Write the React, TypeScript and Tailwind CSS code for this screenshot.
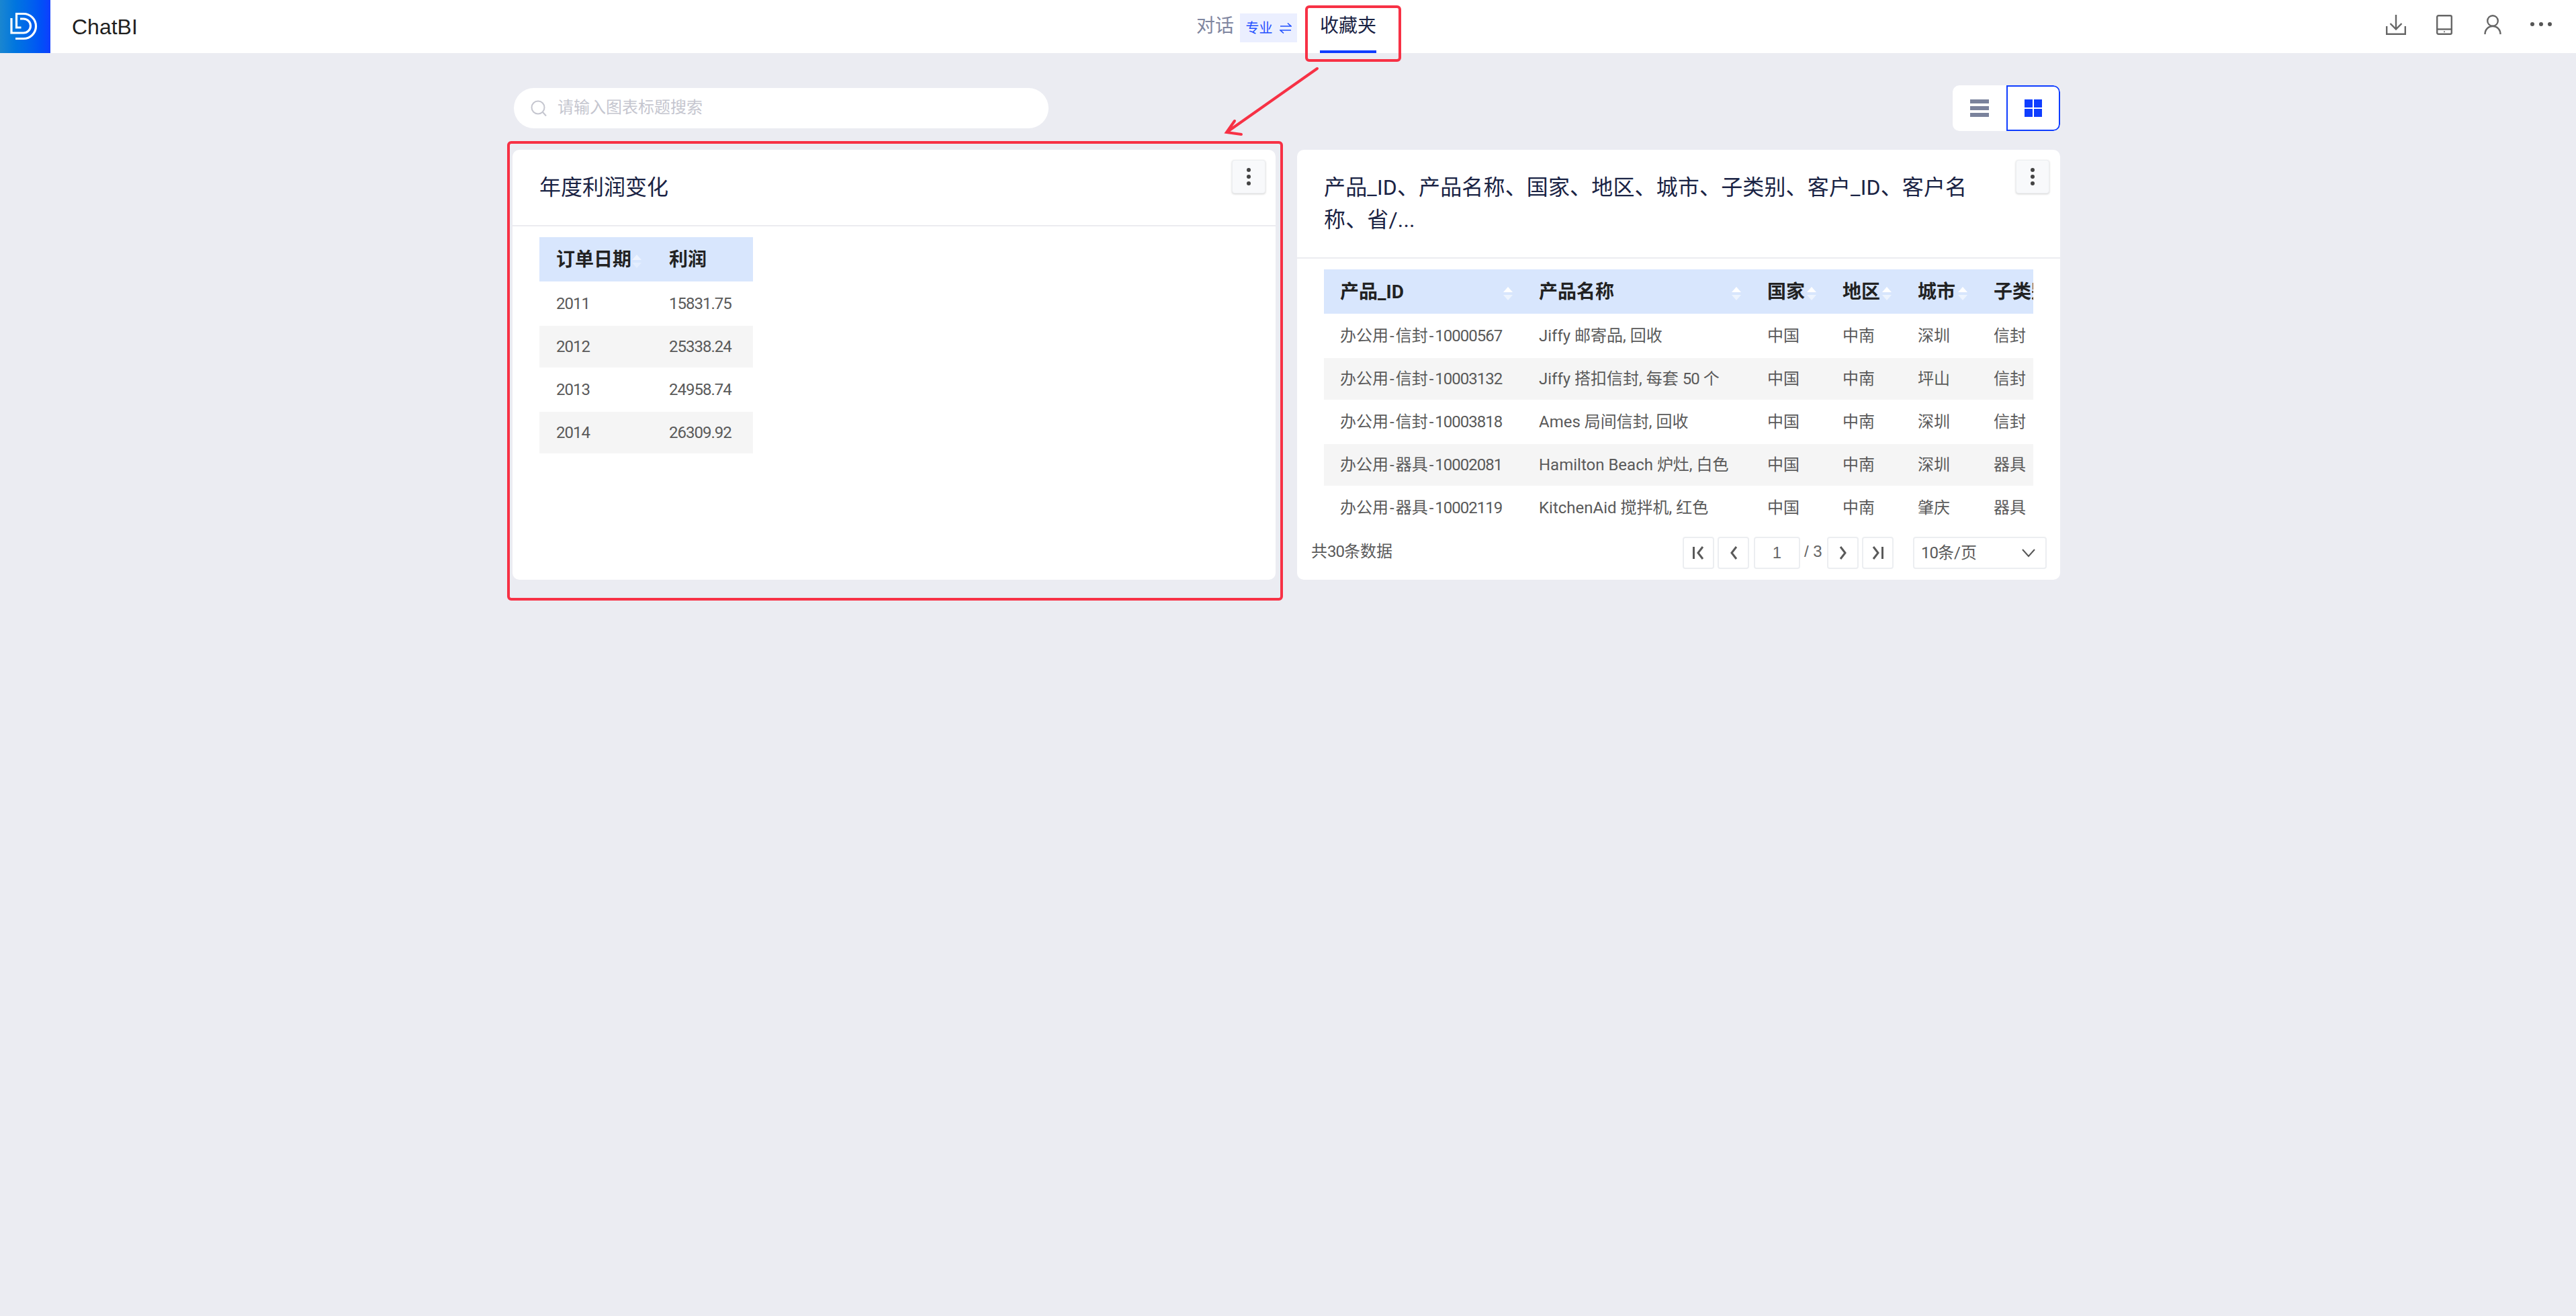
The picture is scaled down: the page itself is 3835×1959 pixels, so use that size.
import React from "react";

const FONT = "[font-family:Roboto,'Noto_Sans_CJK_SC',sans-serif]";

function T({ s }: { s: string }) {
  const parts = s.split(/([0-9.]+|-)/).filter(Boolean);
  return (
    <>
      {parts.map((p, i) => {
        if (p === "-") return <span key={i} className="mx-[2px]">-</span>;
        if (/^[0-9.]+$/.test(p)) return <span key={i} className="tracking-[-1px]">{p}</span>;
        return <span key={i}>{p}</span>;
      })}
    </>
  );
}

function Logo() {
  return (
    <svg width="75" height="79" viewBox="0 0 75 79" fill="none" stroke="#fff" strokeWidth="3.2">
      <path d="M23 20.500h12a18.500 18.500 0 0 1 0 37H23" />
      <path d="M17 27v22h18a10.500 10.500 0 0 0 0-21h-5" />
      <path d="M24.500 20v21h7" />
    </svg>
  );
}

function Sort({ color = "#ffffff" }: { color?: string }) {
  return (
    <svg width="16" height="20" viewBox="0 0 16 20" className="mt-1 shrink-0">
      <path d="M8 0l7 8H1z" fill={color} />
      <path d="M8 20l7-8H1z" fill={color} opacity="0.55" />
    </svg>
  );
}

function Kebab({ pos }: { pos: string }) {
  return (
    <div className={`absolute top-[15px] ${pos} flex h-[50px] w-[50px] flex-col items-center justify-center gap-1 rounded-[4px] border border-[#eceef1] bg-[#f8f9fb] shadow-[0_1px_3px_rgba(0,0,0,0.18)]`}>
      <span className="h-[6px] w-[6px] rounded-full bg-[#444]" />
      <span className="h-[6px] w-[6px] rounded-full bg-[#444]" />
      <span className="h-[6px] w-[6px] rounded-full bg-[#444]" />
    </div>
  );
}

const rows1 = [
  ["2011", "15831.75"],
  ["2012", "25338.24"],
  ["2013", "24958.74"],
  ["2014", "26309.92"],
];

const rows2 = [
  ["办公用-信封-10000567", "Jiffy 邮寄品, 回收", "中国", "中南", "深圳", "信封"],
  ["办公用-信封-10003132", "Jiffy 搭扣信封, 每套 50 个", "中国", "中南", "坪山", "信封"],
  ["办公用-信封-10003818", "Ames 局间信封, 回收", "中国", "中南", "深圳", "信封"],
  ["办公用-器具-10002081", "Hamilton Beach 炉灶, 白色", "中国", "中南", "深圳", "器具"],
  ["办公用-器具-10002119", "KitchenAid 搅拌机, 红色", "中国", "中南", "肇庆", "器具"],
];

const widths2 = ["w-[296px]", "w-[340px]", "w-[112px]", "w-[112px]", "w-[113px]", "w-[120px]"];
const heads2 = ["产品_ID", "产品名称", "国家", "地区", "城市", "子类别"];

function PageBtn({ children, w = "w-[47px]" }: { children: React.ReactNode; w?: string }) {
  return (
    <div className={`flex h-12 ${w} items-center justify-center rounded-[4px] border-2 border-[#eceef1] bg-white [font-family:'Liberation_Sans',sans-serif] text-[#666]`}>
      {children}
    </div>
  );
}

function Pg({ d }: { d: string }) {
  return (
    <svg width="22" height="22" viewBox="0 0 22 22" fill="none" stroke="#5a5a5a" strokeWidth="3">
      <path d={d} />
    </svg>
  );
}

export default function App() {
  return (
    <div className={`relative min-h-[1959px] bg-[#ebecf2] ${FONT}`}>
      <header className="relative flex h-[79px] items-center bg-white">
        <div className="h-[79px] w-[75px] bg-gradient-to-r from-[#1a86d0] to-[#0f3dff]">
          <Logo />
        </div>
        <div className="ml-[32px] [font-family:'Liberation_Sans',sans-serif] text-[32px] text-[#1f1f1f]">ChatBI</div>
        <div className="absolute left-[1781px] top-0 flex h-[79px] items-start">
          <div className="mt-[19px] text-[28px] leading-[40px] text-[#7f86a0]">对话</div>
          <div className="ml-[9px] mt-5 flex h-[43px] w-[85px] items-center justify-center gap-[10px] bg-[#ebefff] text-[20px] text-[#1f4fff]">
            <span>专业</span>
            <svg width="18" height="18" viewBox="0 0 18 18" fill="none" stroke="#1f4fff" strokeWidth="1.6">
              <path d="M1 6h16L12 1.500M17 12H1l5 4.500" />
            </svg>
          </div>
          <div className="ml-[34px] flex h-[79px] w-[84px] flex-col items-center border-b-4 border-[#0f3dff]">
            <span className="mt-[19px] text-[28px] leading-[40px] text-[#1a2344]">收藏夹</span>
          </div>
        </div>
        <div className="absolute left-[3552px] top-[22px] flex items-start">
          <svg width="30" height="30" viewBox="0 0 30 30" fill="none" stroke="#666" strokeWidth="2.4">
            <path d="M1.200 17v11.800h27.600V17M15 0v21M6.500 13l8.500 8.500 8.500-8.500" />
          </svg>
          <svg className="ml-[45px]" width="24" height="30" viewBox="0 0 24 30" fill="none" stroke="#666" strokeWidth="2.4">
            <rect x="1.200" y="1.200" width="21.600" height="27.600" rx="2" />
            <path d="M1.200 21.500h21.600" />
            <circle cx="12" cy="25.200" r="1" fill="#666" stroke="none" />
          </svg>
          <svg className="ml-[47px]" width="26" height="30" viewBox="0 0 26 30" fill="none" stroke="#666" strokeWidth="2.4">
            <circle cx="13" cy="9" r="7.800" />
            <path d="M1.500 29c0-7 5-12 11.500-12s11.500 5 11.500 12" />
          </svg>
          <div className="ml-[43px] mt-[11px] flex items-center gap-[7px]">
            <span className="h-[6px] w-[6px] rounded-full bg-[#555]" />
            <span className="h-[6px] w-[6px] rounded-full bg-[#555]" />
            <span className="h-[6px] w-[6px] rounded-full bg-[#555]" />
          </div>
        </div>
      </header>

      <main className="pl-[763px]">
        <div className="flex w-[2304px] items-start justify-between pl-[2px] pt-[48px]">
          <div className="mt-[4px] flex h-[60px] w-[796px] items-center rounded-[30px] bg-white pl-[25px]">
            <svg width="25" height="25" viewBox="0 0 25 25" fill="none" stroke="#c5c6cf" strokeWidth="2">
              <circle cx="11" cy="11" r="9.500" />
              <path d="M18 18l5 5.500" />
            </svg>
            <span className="ml-[15px] -mt-[2px] text-[24px] text-[#c5c6cf]">请输入图表标题搜索</span>
          </div>
          <div className="flex h-[68px] w-[160px] overflow-hidden rounded-[10px] bg-white">
            <div className="flex w-[80px] flex-col items-center justify-center gap-1">
              <span className="h-[6px] w-[28px] bg-[#7a829c]" />
              <span className="h-[6px] w-[28px] bg-[#7a829c]" />
              <span className="h-[6px] w-[28px] bg-[#7a829c]" />
            </div>
            <div className="flex w-[80px] items-center justify-center rounded-r-[10px] border-2 border-[#0f3dff]">
              <div className="grid grid-cols-2 gap-[2px]">
                <span className="h-3 w-3 bg-[#0f3dff]" />
                <span className="h-3 w-3 bg-[#0f3dff]" />
                <span className="h-3 w-3 bg-[#0f3dff]" />
                <span className="h-3 w-3 bg-[#0f3dff]" />
              </div>
            </div>
          </div>
        </div>

        <div className="mt-7 flex h-[640px] w-[2304px] gap-8">
          <section className="relative w-[1136px] rounded-[10px] bg-white">
            <h2 className="border-b-2 border-[#ebecf0] px-10 py-8 text-[32px] leading-[48px] font-normal text-[#1a2344]">年度利润变化</h2>
            <div className="ml-10 mt-4 w-[318px]">
              <div className="flex h-[66px] items-center bg-[#d8e6fd] pt-[2px] text-[28px] font-bold text-[#222]">
                <div className="flex w-[193px] items-center pl-[25px]">
                  <span>订单日期</span>
                  <Sort color="#eef4ff" />
                </div>
                <span>利润</span>
              </div>
              {rows1.map((r, i) => (
                <div key={r[0]} className="h-16 border-t-2 border-white">
                  <div className={`flex h-[62px] items-center text-[24px] text-[#5a5a5a] ${i % 2 ? "bg-[#f5f5f5]" : ""}`}>
                    <div className="w-[193px] pl-[25px]"><T s={r[0]} /></div>
                    <div><T s={r[1]} /></div>
                  </div>
                </div>
              ))}
            </div>
            <Kebab pos="right-[15px]" />
          </section>

          <section className="relative flex w-[1136px] flex-col rounded-[10px] bg-white">
            <div className="border-b-2 border-[#ebecf0] py-8 pl-10 pr-[125px] text-[32px] leading-[48px] tracking-[0.15px] text-[#1a2344]">
              产品_ID、产品名称、国家、地区、城市、子类别、客户_ID、客户名称、省/...
            </div>
            <div className="mx-10 mt-4 w-[1056px] overflow-hidden">
              <div className="flex h-[66px] w-[1200px] items-center bg-[#d8e6fd] pt-[2px] text-[28px] font-bold text-[#222]">
                {heads2.map((h, i) => (
                  <div key={h} className={`flex ${widths2[i]} items-center justify-between pl-[24px] pr-[14px]`}>
                    <span className="whitespace-nowrap">{h}</span>
                    <Sort />
                  </div>
                ))}
              </div>
              {rows2.map((r, ri) => (
                <div key={ri} className="h-16 w-[1200px] border-t-2 border-white">
                  <div className={`flex h-[62px] items-center text-[24px] text-[#5a5a5a] ${ri % 2 ? "bg-[#f5f5f5]" : ""}`}>
                    {r.map((c, ci) => (
                      <div key={ci} className={`${widths2[ci]} whitespace-nowrap pl-[24px]`}>
                        <T s={c} />
                      </div>
                    ))}
                  </div>
                </div>
              ))}
            </div>
            <div className="mt-3 flex h-12 items-center pl-[21px] pr-5 text-[24px] text-[#5a5a5a]">
              <div className="-mt-1"><T s="共30条数据" /></div>
              <div className="ml-auto flex items-center">
                <PageBtn><Pg d="M3.500 2v18M17 2l-7 9 7 9" /></PageBtn>
                <div className="ml-[5px]"><PageBtn><Pg d="M15 2l-7 9 7 9" /></PageBtn></div>
                <div className="ml-[7px]"><PageBtn w="w-[69px]">1</PageBtn></div>
                <span className="ml-[6px] w-[28px] -mt-1 whitespace-nowrap [font-family:'Liberation_Sans',sans-serif] text-[#666]">/ 3</span>
                <div className="ml-[6px]"><PageBtn><Pg d="M7 2l7 9-7 9" /></PageBtn></div>
                <div className="ml-[5px]"><PageBtn><Pg d="M4 2l7 9-7 9M17.500 2v18" /></PageBtn></div>
                <div className="ml-[29px] flex h-12 w-[199px] items-center justify-between rounded-[4px] border-2 border-[#eceef1] pl-[10px] pr-[14px]">
                  <span><T s="10条/页" /></span>
                  <svg width="22" height="14" viewBox="0 0 22 14" fill="none" stroke="#555" strokeWidth="2">
                    <path d="M2 2l9 10 9-10" />
                  </svg>
                </div>
              </div>
            </div>
            <Kebab pos="right-4" />
          </section>
        </div>
      </main>

      {/* annotation overlay */}
      <div className="pointer-events-none absolute left-[1943px] top-2 h-[84px] w-[143px] rounded-[6px] border-4 border-[#f73145]" />
      <div className="pointer-events-none absolute left-[755px] top-[210px] h-[684px] w-[1155px] rounded-[6px] border-4 border-[#f73145]" />
      <svg className="pointer-events-none absolute left-[1810px] top-[95px]" width="160" height="112" viewBox="0 0 160 112" fill="none" stroke="#f73145" strokeWidth="4" strokeLinecap="round">
        <path d="M151 7L16 102M28 85L16 102L38 105" />
      </svg>
    </div>
  );
}
